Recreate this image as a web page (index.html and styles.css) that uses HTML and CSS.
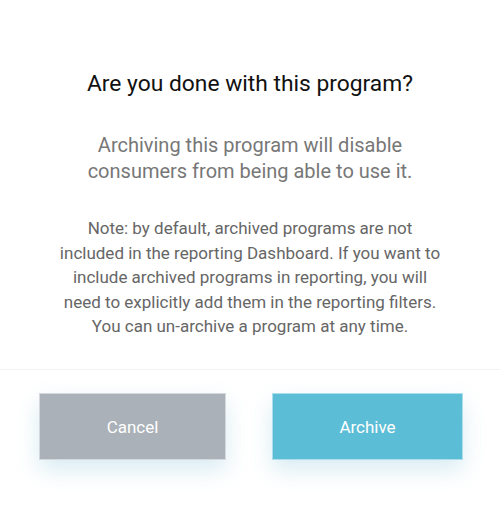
FILE: index.html
```html
<!DOCTYPE html>
<html>
<head>
<meta charset="utf-8">
<link rel="stylesheet" href="styles.css">
</head>
<body>
<div class="dialog">
  <div class="content">
    <h1 class="title">Are you done with this program?</h1>
    <p class="lead">Archiving this program will disable<br>consumers from being able to use it.</p>
    <p class="note">Note: by default, archived programs are not<br>included in the reporting Dashboard. If you want to<br>include archived programs in reporting, you will<br>need to explicitly add them in the reporting filters.<br>You can un-archive a program at any time.</p>
  </div>
  <div class="actions">
    <button class="btn btn-cancel">Cancel</button>
    <button class="btn btn-archive">Archive</button>
  </div>
</div>
</body>
</html>
```
FILE: styles.css
```css
html, body {
  margin: 0;
  padding: 0;
  background: #ffffff;
}
body {
  font-family: Roboto, "Liberation Sans", Arial, sans-serif;
  width: 500px;
  height: 529px;
  overflow: hidden;
}
.dialog {
  display: flex;
  flex-direction: column;
}
.content {
  padding: 70px 0 0;
  text-align: center;
  border-bottom: 1px solid #f2f2f2;
  height: 299px;
}
.title {
  margin: 0;
  font-size: 22.8px;
  font-weight: 400;
  line-height: 28px;
  color: #111111;
}
.lead {
  margin: 34px 0 0;
  font-size: 20px;
  line-height: 26px;
  color: #777777;
}
.note {
  margin: 32px 0 0;
  font-size: 17px;
  line-height: 24.5px;
  color: #666666;
}
.actions {
  display: flex;
  gap: 46px;
  padding: 23px 0 0 39px;
}
.btn {
  font-family: inherit;
  font-size: 17px;
  color: #ffffff;
  height: 67px;
  border: 1px solid rgba(255,255,255,0.5);
  cursor: pointer;
  box-shadow: 0 10px 22px rgba(80, 170, 200, 0.22);
}
.btn-cancel {
  width: 187px;
  background: #aab1b8;
}
.btn-archive {
  width: 191px;
  background: #5bbdd6;
}
```
